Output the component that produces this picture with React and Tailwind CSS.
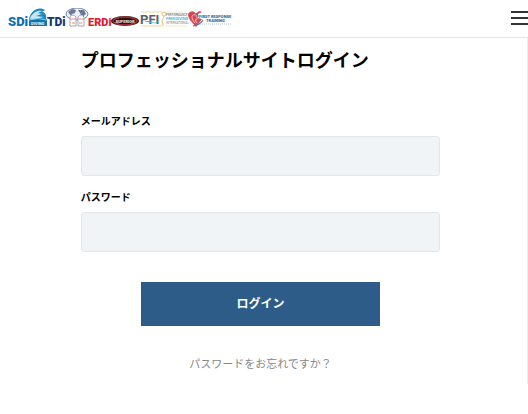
import React, { useState } from 'react';

function BrandLogos() {
  return (
    <svg
      viewBox="0 0 226 24"
      className="block h-6 w-[226px] shrink-0"
      fontFamily="Roboto, sans-serif"
      fontWeight="900"
      role="img"
      aria-label="SDI TDI ERDI PFI First Response Training"
    >
      {/* SDI */}
      <text x="0" y="18" fontSize="13" fill="#0b6fb5">SDi</text>
      <path d="M21 11 C23 2 31 -2 37 2 L34 4 C37 4 39 7 38 11 L21 14 Z" fill="#1b86c0" />
      <path d="M22 10 C25 4 30 2 34 3 L30 5 L34 6 L28 8 L36 9 L23 12 Z" fill="#c5e6f2" />
      <rect x="21" y="11" width="18" height="7" fill="#0c76ae" />
      <path d="M21 12 Q30 9 39 12" stroke="#8fcbe3" fill="none" />
      <text x="23" y="17" fontSize="4" fill="#d8f0f7">DIVING</text>

      {/* TDI */}
      <text x="39" y="18" fontSize="12" fill="#17366f">TDi</text>
      <ellipse cx="69" cy="6" rx="11" ry="6" fill="#edf0f6" stroke="#7c86a2" />
      <path d="M60 4 L64 1 L68 2 L67 5 L64 6 L63 8 Z M70 2 L76 2 L78 6 L74 9 L72 5 Z" fill="#6a7799" />
      <path d="M62 18 V9 Q65 5 68 9 V18 Z M70 18 V9 Q73 5 76 9 V18 Z" fill="#ffffff" stroke="#a5a3b4" />
      <path d="M62 11 H68 M70 11 H76 M64 15 H67 M71 15 H74" stroke="#e9888e" />

      {/* ERDI */}
      <text x="80" y="18" fontSize="11" fill="#e31b2f">ERDi</text>
      <ellipse cx="117" cy="13" rx="14" ry="5" fill="#4a1d1b" />
      <ellipse cx="117" cy="13" rx="12" ry="4" fill="#271413" stroke="#c86b62" strokeWidth="0.6" />
      <path d="M105 12 Q117 6 129 12 M106 14 Q117 20 128 14" stroke="#a92d29" fill="none" />
      <text x="117" y="15" fontSize="4" fill="#f2dddd" textAnchor="middle">SUPERIOR</text>

      {/* PFI */}
      <path d="M133 4 H154 M133 18 H154" stroke="#e9c675" strokeWidth="0.7" />
      <text x="132" y="16" fontSize="13" fontWeight="700" fill="#596169">PFI</text>
      <path d="M136 14 Q140 12 144 14 T151 12 L149 15 Q144 16 140 14 Z" fill="#3eb3df" />
      <circle cx="156" cy="6" r="2" fill="none" stroke="#e6b24c" strokeWidth="0.8" />
      <path d="M156 8 Q153 12 155 18" fill="none" stroke="#e6b24c" strokeWidth="0.8" />
      <g fontWeight="500">
        <text x="158" y="8" fontSize="3" fill="#777f83">PERFORMANCE</text>
        <text x="158" y="12" fontSize="4" fill="#27a7d4">FREEDIVING</text>
        <text x="158" y="16" fontSize="3" fill="#9a9d9a">INTERNATIONAL</text>
      </g>
      <path d="M158 4 H178 M158 18 H178" stroke="#ead29b" strokeWidth="0.5" />

      {/* First Response Training */}
      <path d="M188 19 L182 12 Q178 6 182 4 Q186 2 188 6 Q190 2 194 4 L190 6 L190 10 L194 11 Z" fill="#d94651" />
      <path d="M187 15 Q182 9 185 7 Q188 5 189 9 Q190 12 187 12 L189 15" fill="none" stroke="#f3b7ba" />
      <path d="M185 18 Q192 17 195 12 M187 6 Q190 5 190 9" fill="none" stroke="#397eaa" strokeWidth="1.2" />
      <g fill="#286fa0">
        <text x="191" y="10" fontSize="4">FIRST RESPONSE</text>
        <text x="198" y="14" fontSize="4">TRAINING</text>
      </g>
      <path d="M192 16 H223" stroke="#b4c6d3" strokeWidth="1" strokeDasharray="1 1" />
    </svg>
  );
}

function Field({ id, label, type, value, onChange }) {
  return (
    <div>
      <label htmlFor={id} className="block text-[10px] leading-4 font-bold text-black">
        {label}
      </label>
      <input
        id={id}
        type={type}
        value={value}
        onChange={(e) => onChange(e.target.value)}
        className="mt-1.5 block h-10 w-full rounded-[3px] border border-[#e3e6e8] bg-[#f0f4f7] px-3 text-sm"
      />
    </div>
  );
}

function App() {
  const [email, setEmail] = useState('');
  const [password, setPassword] = useState('');

  return (
    <div className="bg-white font-['Liberation_Sans','Noto_Sans_CJK_JP',sans-serif]">
      <header className="flex h-[38px] items-start justify-between border-b border-[#e4e4e4] pt-2 pl-2">
        <a href="#home">
          <BrandLogos />
        </a>
        <button type="button" aria-label="メニュー" className="flex w-[17px] flex-col gap-1 pt-[3px]">
          <span className="h-0.5 w-full bg-[#333]" />
          <span className="h-0.5 w-full bg-[#333]" />
          <span className="h-0.5 w-full bg-[#333]" />
        </button>
      </header>

      <main className="border-r border-[#eeeeee] pt-2 pr-1.5 pb-2.5">
        <div className="mx-auto w-[69%]">
          <h1 className="text-lg leading-[30px] font-bold whitespace-nowrap text-black">
            プロフェッショナルサイトログイン
          </h1>

          <form onSubmit={(e) => e.preventDefault()} className="mt-[38px]">
            <div className="space-y-3.5">
              <Field id="email" label="メールアドレス" type="email" value={email} onChange={setEmail} />
              <Field id="password" label="パスワード" type="password" value={password} onChange={setPassword} />
            </div>
            <button
              type="submit"
              className="mx-auto mt-[30px] block h-11 w-2/3 bg-[#2d5c88] text-xs font-bold text-white"
            >
              ログイン
            </button>
          </form>

          <p className="mt-7 text-center text-[11px] leading-5">
            <a href="#forgot" className="text-[#888]">パスワードをお忘れですか？</a>
          </p>
        </div>
      </main>
    </div>
  );
}

export default App;
